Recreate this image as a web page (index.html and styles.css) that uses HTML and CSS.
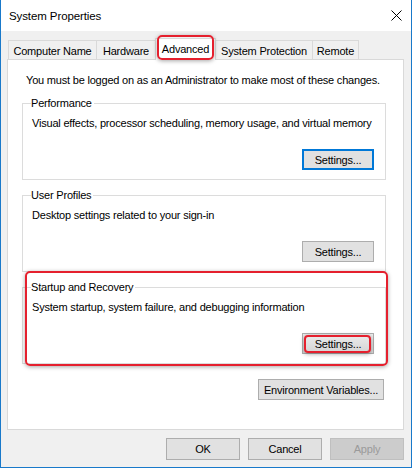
FILE: index.html
```html
<!DOCTYPE html>
<html lang="en">
<head>
<meta charset="utf-8">
<title>System Properties</title>
<link rel="stylesheet" href="styles.css">
</head>
<body>
<div class="window">
  <div class="titlebar">
    <span class="title">System Properties</span>
    <svg class="close" width="11" height="11" viewBox="0 0 11 11"><path d="M0.5 0.5L10.5 10.5M10.5 0.5L0.5 10.5" stroke="#000" stroke-width="1" fill="none"/></svg>
  </div>
  <div class="client">
    <div class="tabs">
      <div class="tab t-cn">Computer Name</div>
      <div class="tab t-hw">Hardware</div>
      <div class="tab active">Advanced<span class="mark mark-tab"></span></div>
      <div class="tab t-sp">System Protection</div>
      <div class="tab t-rm">Remote</div>
    </div>
    <div class="panel">
      <p class="notice">You must be logged on as an Administrator to make most of these changes.</p>
      <fieldset class="group">
        <legend>Performance</legend>
        <p class="desc">Visual effects, processor scheduling, memory usage, and virtual memory</p>
        <div class="btn-row"><button class="btn default">Settings...</button></div>
      </fieldset>
      <fieldset class="group">
        <legend>User Profiles</legend>
        <p class="desc">Desktop settings related to your sign-in</p>
        <div class="btn-row"><button class="btn">Settings...</button></div>
      </fieldset>
      <div class="marked">
        <fieldset class="group">
          <legend>Startup and Recovery</legend>
          <p class="desc">System startup, system failure, and debugging information</p>
          <div class="btn-row"><button class="btn hot">Settings...<span class="mark mark-btn"></span></button></div>
        </fieldset>
        <span class="mark mark-group"></span>
      </div>
      <div class="env-row"><button class="btn env">Environment Variables...</button></div>
    </div>
    <div class="footer">
      <button class="btn foot">OK</button>
      <button class="btn foot">Cancel</button>
      <button class="btn foot disabled">Apply</button>
    </div>
  </div>
</div>
</body>
</html>
```
FILE: styles.css
```css
* { box-sizing: border-box; }
body {
  margin: 0;
  font-family: "Liberation Sans", Arial, sans-serif;
  font-size: 11px;
  letter-spacing: -0.2px;
  color: #000;
  background: #fff;
}
.window {
  width: 412px;
  height: 468px;
  border: 1px solid #1979ca;
  border-top: none;
  display: flex;
  flex-direction: column;
  background: #f0f0f0;
}
.titlebar {
  height: 31px;
  flex: none;
  background: #fff;
  display: flex;
  align-items: center;
  justify-content: space-between;
  padding: 0 9px 0 8px;
}
.title { font-size: 11.5px; letter-spacing: -0.1px; }
.close { display: block; }
.client {
  flex: 1;
  display: flex;
  flex-direction: column;
  padding: 7px 7px 0 6px;
}
.tabs {
  display: flex;
  align-items: flex-end;
  padding-left: 2px;
  position: relative;
  z-index: 1;
}
.tab {
  height: 19px;
  padding: 1px 0 0;
  border: 1px solid #d9d9d9;
  border-bottom: none;
  margin-left: -1px;
  display: flex;
  align-items: center;
  justify-content: center;
  background: #f0f0f0;
  white-space: nowrap;
}
.t-cn { width: 89px; }
.t-hw { width: 60px; }
.t-sp { width: 98px; }
.t-rm { width: 47px; }
.tab.active {
  position: relative;
  z-index: 2;
  width: 61px;
  height: 22px;
  margin-bottom: -1px;
  padding: 0 0 1px;
  background: #fff;
}
.panel {
  height: 371px;
  background: #fff;
  border: 1px solid #d9d9d9;
  padding: 12px 17px 0 14px;
  display: flex;
  flex-direction: column;
}
.notice {
  margin: 0 0 0 4px;
  line-height: 16px;
}
.group {
  margin: 7px 0 0;
  padding: 4px 11px 9px 8px;
  border: 1px solid #dcdcdc;
  min-width: 0;
}
.group legend {
  padding: 0 2px 0 0;
  line-height: 16px;
}
.desc {
  margin: 0 0 0 1px;
  line-height: 16px;
}
.btn-row {
  display: flex;
  justify-content: flex-end;
  margin-top: 18px;
}
.btn {
  position: relative;
  font: inherit;
  letter-spacing: inherit;
  color: #000;
  background: #e1e1e1;
  border: 1px solid #adadad;
  width: 72px;
  height: 21px;
  padding: 0;
  margin: 0;
}
.btn.default { border: 2px solid #0078d7; }
.btn.hot { background: linear-gradient(#ececec, #d4d4d4); }
.btn.env { width: 126px; }
.btn.foot { width: 74px; height: 22px; }
.btn.disabled {
  background: #cccccc;
  border-color: #bfbfbf;
  color: #9a9a9a;
}
.marked { position: relative; }
.env-row {
  display: flex;
  justify-content: flex-end;
  margin-top: 15px;
  padding-right: 2px;
}
.footer {
  display: flex;
  justify-content: flex-end;
  gap: 8px;
  margin-top: 8px;
}
.mark {
  position: absolute;
  border: 2px solid #e5202e;
  border-radius: 5px;
  box-shadow: 0 1px 4px rgba(0, 0, 0, 0.35);
  pointer-events: none;
}
.mark-tab { top: -4px; left: 1px; right: 1px; bottom: 0; }
.mark-group { top: -1px; left: 3px; right: -2px; bottom: -2px; }
.mark-btn { top: 1px; left: 1px; right: 2px; bottom: 0; border-radius: 4px; }
```
